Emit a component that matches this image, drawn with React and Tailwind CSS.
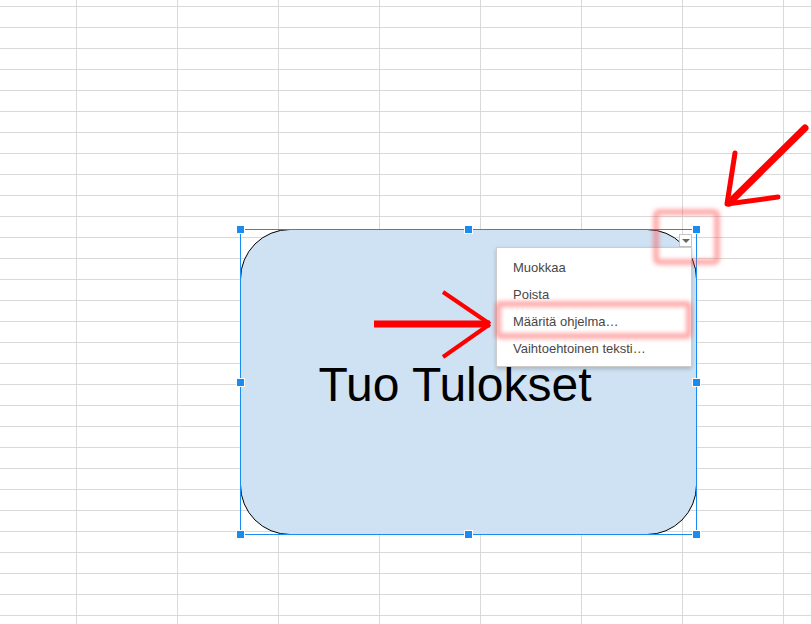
import React from "react";

const COLS = 9;
const ROWS = 31;

const menuItems = ["Muokkaa", "Poista", "Määritä ohjelma…", "Vaihtoehtoinen teksti…"];

const Handle = () => <div className="w-[9px] h-[9px] bg-[#1a8cf0] border border-white" />;

const SheetGrid = () => {
  const cells = [];
  for (let r = 0; r < ROWS; r++) {
    for (let c = 0; c < COLS; c++) {
      cells.push(<div key={`${r}-${c}`} className="border-r border-b border-[#d9d9d9]" />);
    }
  }
  return (
    <div className="grid w-max grid-cols-[77px_repeat(8,101px)] grid-rows-[7px_repeat(30,21px)]">
      {cells}
    </div>
  );
};

export default function App() {
  return (
    <div className="relative w-[811px] h-[624px] overflow-hidden bg-white font-['Liberation_Sans',Arial,sans-serif]">
      <SheetGrid />

      {/* drawing with its selection frame */}
      <div className="absolute left-[240px] top-[229px] w-[457px] h-[306px]">
        <div className="w-full h-full rounded-[50px] border border-black bg-[#cfe2f3] flex items-center justify-center pr-[27px] pt-[6px]">
          <span className="text-[48px] leading-none text-black">Tuo Tulokset</span>
        </div>
        <div className="absolute inset-0 border border-[#1a8cf0]">
          <div className="-m-[5px] h-[calc(100%+10px)] flex flex-col justify-between">
            <div className="flex justify-between">
              <Handle />
              <Handle />
              <Handle />
            </div>
            <div className="flex justify-between">
              <Handle />
              <Handle />
            </div>
            <div className="flex justify-between">
              <Handle />
              <Handle />
              <Handle />
            </div>
          </div>
        </div>
      </div>

      {/* drawing menu button */}
      <div className="absolute left-[679px] top-[234px] w-[13px] h-[13px] bg-white border border-[#c6c6c6] flex items-center justify-center">
        <div className="w-0 h-0 border-l-[4px] border-r-[4px] border-t-[4px] border-l-transparent border-r-transparent border-t-[#666]" />
      </div>

      {/* context menu */}
      <div className="absolute left-[496px] top-[247px] w-[196px] bg-white border border-[#cdcdcd] shadow-[0_2px_4px_rgba(0,0,0,0.2)] pt-[6px] pb-[4px]">
        {menuItems.map((item) => (
          <div key={item} className="h-[27px] leading-[27px] pl-[16px] text-[13px] text-[#474747]">
            {item}
          </div>
        ))}
      </div>

      {/* annotation highlights */}
      <div className="absolute left-[653px] top-[209px] w-[67px] h-[56px] rounded-[6px] border-[6px] border-[rgba(255,70,70,0.45)] blur-[2px]" />
      <div className="absolute left-[495px] top-[301px] w-[197px] h-[38px] rounded-[5px] border-[6px] border-[rgba(255,70,70,0.45)] blur-[2px]" />

      {/* annotation arrows */}
      <svg className="absolute left-0 top-0" width="811" height="624" viewBox="0 0 811 624">
        <g stroke="#ff0000" fill="none" strokeLinecap="butt">
          <line x1="374" y1="324" x2="490" y2="324" strokeWidth="7" />
          <line x1="443" y1="292" x2="490" y2="324" strokeWidth="4" />
          <line x1="490" y1="324" x2="443" y2="357" strokeWidth="4" />
        </g>
        <g stroke="#ff0000" fill="none" strokeLinecap="round" strokeLinejoin="round">
          <line x1="805" y1="128" x2="729" y2="203" strokeWidth="7" />
          <polyline points="735,153 727,204 778,197" strokeWidth="5" />
        </g>
      </svg>
    </div>
  );
}
